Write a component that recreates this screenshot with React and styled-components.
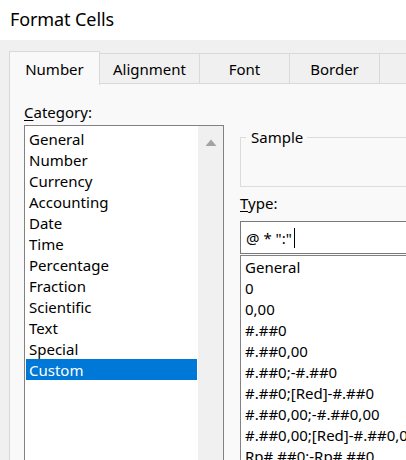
import React from "react";
import styled, { createGlobalStyle } from "styled-components";

const Global = createGlobalStyle`
  html, body { margin: 0; padding: 0; }
  body {
    width: 406px; height: 460px; overflow: hidden; background: #f0f0f0;
    font-family: "Noto Sans", "Open Sans", sans-serif; color: #000;
  }
  * { box-sizing: border-box; }
`;

const Window = styled.div`
  width: 406px; height: 460px; display: flex; flex-direction: column; overflow: hidden;
`;

const TitleBar = styled.div`
  height: 40px; flex: none; background: #fff; display: flex; align-items: center;
  padding: 0 0 3px 10px; font-size: 18px; letter-spacing: -0.1px;
`;

const Body = styled.div`
  flex: 1; background: #f0f0f0; padding: 11px 0 0 9px; display: flex; flex-direction: column;
  min-height: 0;
`;

const TabStrip = styled.div`
  display: flex; align-items: flex-end; height: 33px; flex: none; position: relative; z-index: 1;
`;

const Tab = styled.div`
  width: ${(p) => p.$w}px; flex: none;
  height: ${(p) => (p.$active ? 34 : 31)}px;
  margin-bottom: ${(p) => (p.$active ? -1 : 0)}px;
  background: ${(p) => (p.$active ? "#f9f9f9" : "#f0f0f0")};
  border: 1px solid #d9d9d9;
  border-bottom: ${(p) => (p.$active ? "none" : "1px solid #d9d9d9")};
  border-left: ${(p) => (p.$first ? "1px solid #d9d9d9" : "none")};
  display: flex; align-items: center; justify-content: center;
  padding-top: 1px;
  font-size: 15px;
`;

const Panel = styled.div`
  flex: 1; background: #f9f9f9; border-left: 1px solid #d9d9d9;
  padding: 18px 0 0 14px; display: grid; grid-template-columns: 200px 1fr;
  column-gap: 16px; min-height: 0;
`;

const Column = styled.div`
  display: flex; flex-direction: column; min-width: 0;
`;

const Label = styled.div`
  font-size: 15px; line-height: 21px; height: 21px;
  margin-top: ${(p) => p.$mt || 0}px;
  u { text-decoration: underline; text-underline-offset: 2px; }
`;

const ListBox = styled.div`
  margin-top: ${(p) => p.$mt || 0}px;
  border: 1px solid ${(p) => p.$border || "#828282"};
  border-right: ${(p) => (p.$open ? "none" : `1px solid ${p.$border || "#828282"}`)};
  border-bottom: none;
  background: #fff; flex: 1; display: flex; min-height: 0;
  width: ${(p) => (p.$open ? "calc(100% + 20px)" : "auto")};
`;

const Items = styled.div`
  flex: 1; padding: ${(p) => p.$pt ?? 1}px 1px 0 1px; display: flex; flex-direction: column; min-width: 0;
`;

const Item = styled.div`
  height: 21px; line-height: 22px; padding-left: 3px; font-size: 15px; white-space: nowrap;
  background: ${(p) => (p.$selected ? "#0078d7" : "transparent")};
  color: ${(p) => (p.$selected ? "#fff" : "#000")};
`;

const ScrollTrack = styled.div`
  width: 25px; flex: none; background: #f0f0f0; display: flex; justify-content: center;
  padding-top: 13px;
`;

const Group = styled.fieldset`
  margin: 25px -20px 0 0; padding: 0; height: 60px;
  border: 1px solid #dcdcdc; border-right: none;
`;

const Legend = styled.legend`
  margin-left: 5px; padding: 0 4px 0 5px; font-size: 15px; line-height: 21px;
`;

const Input = styled.div`
  margin: 7px -20px 0 0; height: 33px; flex: none; background: #fff;
  border: 1px solid #7a7a7a; border-right: none; display: flex; align-items: center;
  padding-left: 5px; font-size: 15px;
`;

const Caret = styled.span`
  display: inline-block; width: 1px; height: 20px; background: #000; margin-left: 2px;
`;

const categories = [
  "General", "Number", "Currency", "Accounting", "Date", "Time", "Percentage",
  "Fraction", "Scientific", "Text", "Special", "Custom",
];

const types = [
  "General", "0", "0,00", "#.##0", "#.##0,00", "#.##0;-#.##0", "#.##0;[Red]-#.##0",
  "#.##0,00;-#.##0,00", "#.##0,00;[Red]-#.##0,00", "Rp#.##0;-Rp#.##0",
];

export default function App() {
  return (
    <Window>
      <Global />
      <TitleBar>Format Cells</TitleBar>
      <Body>
        <TabStrip>
          <Tab $w={91} $active $first>Number</Tab>
          <Tab $w={100}>Alignment</Tab>
          <Tab $w={90}>Font</Tab>
          <Tab $w={90}>Border</Tab>
          <Tab $w={60}></Tab>
        </TabStrip>
        <Panel>
          <Column>
            <Label><u>C</u>ategory:</Label>
            <ListBox $mt={2}>
              <Items $pt={2}>
                {categories.map((c) => (
                  <Item key={c} $selected={c === "Custom"}>{c}</Item>
                ))}
              </Items>
              <ScrollTrack>
                <svg width="12" height="8" viewBox="0 0 12 8">
                  <path d="M6 0.5 L11.5 7 L0.5 7 Z" fill="#a3a3a3" />
                </svg>
              </ScrollTrack>
            </ListBox>
          </Column>
          <Column>
            <Group>
              <Legend>Sample</Legend>
            </Group>
            <Label $mt={6}><u>T</u>ype:</Label>
            <Input>@ * ":"<Caret /></Input>
            <ListBox $open $mt={1}>
              <Items $pt={0}>
                {types.map((t) => (
                  <Item key={t}>{t}</Item>
                ))}
              </Items>
            </ListBox>
          </Column>
        </Panel>
      </Body>
    </Window>
  );
}
